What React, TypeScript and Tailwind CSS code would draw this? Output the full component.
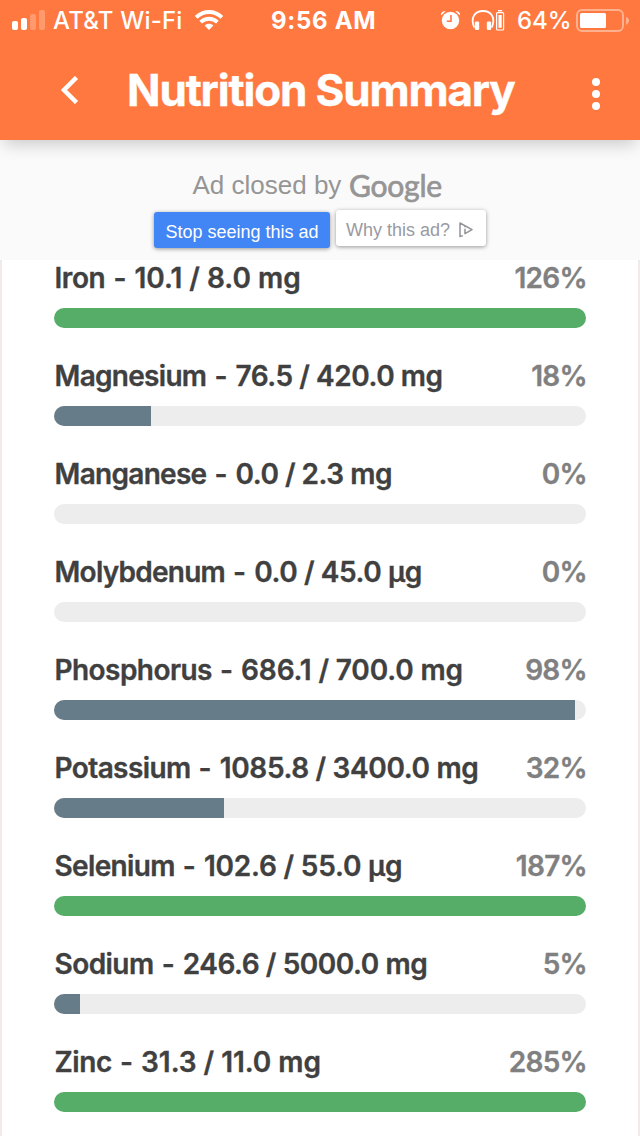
type Nutrient = {
  name: string;
  amount: string;
  goal: string;
  unit: string;
  percent: number;
  nameTracking: string;
  valueTracking: string;
};

const nutrients: Nutrient[] = [
  { name: "Iron", amount: "10.1", goal: "8.0", unit: "mg", percent: 126, nameTracking: "tracking-[-0.4px]", valueTracking: "tracking-[0px]" },
  { name: "Magnesium", amount: "76.5", goal: "420.0", unit: "mg", percent: 18, nameTracking: "tracking-[-0.7px]", valueTracking: "tracking-[-0.45px]" },
  { name: "Manganese", amount: "0.0", goal: "2.3", unit: "mg", percent: 0, nameTracking: "tracking-[-0.7px]", valueTracking: "tracking-[-0.5px]" },
  { name: "Molybdenum", amount: "0.0", goal: "45.0", unit: "µg", percent: 0, nameTracking: "tracking-[-0.75px]", valueTracking: "tracking-[-0.4px]" },
  { name: "Phosphorus", amount: "686.1", goal: "700.0", unit: "mg", percent: 98, nameTracking: "tracking-[-0.55px]", valueTracking: "tracking-[-0.15px]" },
  { name: "Potassium", amount: "1085.8", goal: "3400.0", unit: "mg", percent: 32, nameTracking: "tracking-[-0.6px]", valueTracking: "tracking-[-0.35px]" },
  { name: "Selenium", amount: "102.6", goal: "55.0", unit: "µg", percent: 187, nameTracking: "tracking-[-0.65px]", valueTracking: "tracking-[-0.2px]" },
  { name: "Sodium", amount: "246.6", goal: "5000.0", unit: "mg", percent: 5, nameTracking: "tracking-[-0.55px]", valueTracking: "tracking-[-0.45px]" },
  { name: "Zinc", amount: "31.3", goal: "11.0", unit: "mg", percent: 285, nameTracking: "tracking-[-0.4px]", valueTracking: "tracking-[-0.05px]" },
];

function StatusBar() {
  return (
    <div className="flex h-10 items-center text-[24px] leading-10 whitespace-nowrap">
      <div className="flex w-[271px] items-center pl-3">
        <svg width="33" height="20" viewBox="0 0 33 20" fill="#fff">
          <rect x="0" y="11" width="6" height="9" rx="2" />
          <rect x="9" y="8" width="6" height="12" rx="2" />
          <rect x="18" y="4" width="6" height="16" rx="2" opacity="0.25" />
          <rect x="27" y="0" width="6" height="20" rx="2" opacity="0.25" />
        </svg>
        <span className="ml-2 w-[142px] pt-0.5 font-medium tracking-[0.2px]">AT&amp;T Wi-Fi</span>
        <svg width="28" height="20" viewBox="0 0 28 20" fill="none" stroke="#fff" strokeWidth="4">
          <path d="M1.2 7.400C8.400 0.300 19.600 0.300 26.800 7.400" />
          <path d="M5.600 12.200C10.500 7.600 17.500 7.600 22.400 12.200" strokeWidth="3.800" />
          <path d="M14 20L9.600 15.500C12 13.200 16 13.200 18.400 15.500Z" fill="#fff" stroke="none" />
        </svg>
      </div>
      <span className="w-[169px] pt-0.5 font-bold tracking-[0.7px]">9:56 AM</span>
      <svg width="21" height="20" viewBox="0 0 21 20" fill="#fff">
        <circle cx="10.500" cy="10.500" r="8.700" />
        <path d="M1 5.400C.5 2.600 2.800 .7 5.700 1.300ZM20 5.400C20.500 2.600 18.200 .7 15.300 1.300Z" />
        <path d="M11 5v6.300H6.800" fill="none" stroke="#ff783f" strokeWidth="1.600" />
      </svg>
      <svg className="ml-[10px]" width="34" height="22" viewBox="0 0 34 22" fill="none" stroke="#fff">
        <path d="M3.200 18.500C-1 8.500 4 2 12 2S25 8.500 20.800 18.500" strokeWidth="1.800" />
        <rect x="3.800" y="12.500" width="4.400" height="8.500" rx="1.200" fill="#fff" stroke="none" />
        <rect x="15.800" y="12.500" width="4.400" height="8.500" rx="1.200" fill="#fff" stroke="none" />
        <rect x="25.600" y="3.600" width="7" height="17.400" rx="1" strokeWidth="1.200" />
        <path d="M27 1.700h4.200" strokeWidth="1.400" />
        <path d="M27.500 6h3.200v12.800h-3.200z" fill="#fff" stroke="none" />
      </svg>
      <span className="ml-3 w-[59px] pt-0.5 font-medium">64%</span>
      <svg className="mt-px" width="54" height="24" viewBox="0 0 54 24">
        <rect x="1" y="1" width="46" height="21" rx="5" fill="none" stroke="#fff" strokeWidth="2" opacity="0.42" />
        <rect x="4" y="4" width="26" height="15" rx="1.500" fill="#fff" />
        <path d="M50 8c4 1 4 6 0 8z" fill="#fff" opacity="0.42" />
      </svg>
    </div>
  );
}

function Header() {
  return (
    <header className="relative z-10 h-[140px] bg-[#ff783f] text-white shadow-[0_8px_16px_-4px_rgba(0,0,0,0.2)]">
      <StatusBar />
      <div className="flex h-[100px] items-center pl-[60px]">
        <svg width="20" height="28" viewBox="0 0 20 28" fill="none" stroke="#fff" strokeWidth="4.500">
          <path d="M16.500 1.500L4 14L16.500 26.500" />
        </svg>
        <h1 className="ml-[47px] w-[465px] text-[44px] leading-[100px] font-bold tracking-[-1.15px] whitespace-nowrap [-webkit-text-stroke:0.4px_#fff]">
          Nutrition Summary
        </h1>
        <div className="mt-2 flex flex-col gap-1">
          <span className="size-2 rounded-full bg-white" />
          <span className="size-2 rounded-full bg-white" />
          <span className="size-2 rounded-full bg-white" />
        </div>
      </div>
    </header>
  );
}

function AdNotice() {
  return (
    <section className="h-[120px] bg-[#fafafa] pt-7 font-['Liberation_Sans',Arial,sans-serif] whitespace-nowrap">
      <div className="flex h-[34px] items-center pl-[192.500px] text-[#959595]">
        <span className="w-[156.500px] text-[26px]">Ad closed by</span>
        <span className="font-['Lato',sans-serif] text-[30px] tracking-[-0.200px] [-webkit-text-stroke:0.700px_#959595]">
          Google
        </span>
      </div>
      <div className="flex gap-[6px] pt-2 pl-[154px] text-[18px]">
        <button className="mt-[2px] h-9 w-[176px] rounded-[3px] bg-[#4285f4] pt-1 text-white shadow-[0_1px_4px_rgba(0,0,0,0.4)]">
          Stop seeing this ad
        </button>
        <button className="flex h-9 w-[150px] items-center rounded-[3px] bg-white pt-1 pl-[10px] text-[#9a9aa2] shadow-[0_1px_4px_rgba(0,0,0,0.4)]">
          <span className="w-[113px] text-left">Why this ad?</span>
          <svg width="14" height="16" viewBox="0 0 14 16" fill="none" stroke="#92929a" strokeWidth="1.500">
            <path d="M3.800 13.600L1 14.500V1L13 7.700L6 11.700V6.800" strokeLinejoin="round" />
            <path d="M6 4v1.300" />
          </svg>
        </button>
      </div>
    </section>
  );
}

function NutrientRow({ nutrient }: { nutrient: Nutrient }) {
  const { name, amount, goal, unit, percent, nameTracking, valueTracking } = nutrient;
  const reached = percent >= 100;
  const fill = Math.min((Number(amount) / Number(goal)) * 100, 100);

  return (
    <li className="h-[98px]">
      <div className="flex h-9 items-center justify-between text-[28px] leading-9 font-semibold whitespace-nowrap [font-feature-settings:'calt'_0]">
        <span className="pl-[0.500px] text-[#404040] [-webkit-text-stroke:0.35px_#404040]">
          <span className={nameTracking}>{name}</span>
          <span className="px-px"> - </span>
          <span className={valueTracking}>{`${amount} / ${goal} ${unit}`}</span>
        </span>
        <span className="-mr-px tracking-[-0.700px] text-[#808080] [-webkit-text-stroke:0.35px_#808080]">
          {percent}%
        </span>
      </div>
      <div className="mt-3 h-5 overflow-hidden rounded-full bg-[#ededed]">
        <div
          className={reached ? "h-5 bg-[#56ad68]" : "h-5 bg-[#667c89]"}
          style={{ width: `${fill}%` }}
        />
      </div>
    </li>
  );
}

export default function App() {
  return (
    <div className="h-[1136px] w-[640px] overflow-hidden bg-white font-['Inter',sans-serif]">
      <Header />
      <AdNotice />
      <ul className="h-[876px] overflow-hidden border-x-2 border-[#f0ebe8] px-[52px]">
        {nutrients.map((nutrient) => (
          <NutrientRow key={nutrient.name} nutrient={nutrient} />
        ))}
      </ul>
    </div>
  );
}
